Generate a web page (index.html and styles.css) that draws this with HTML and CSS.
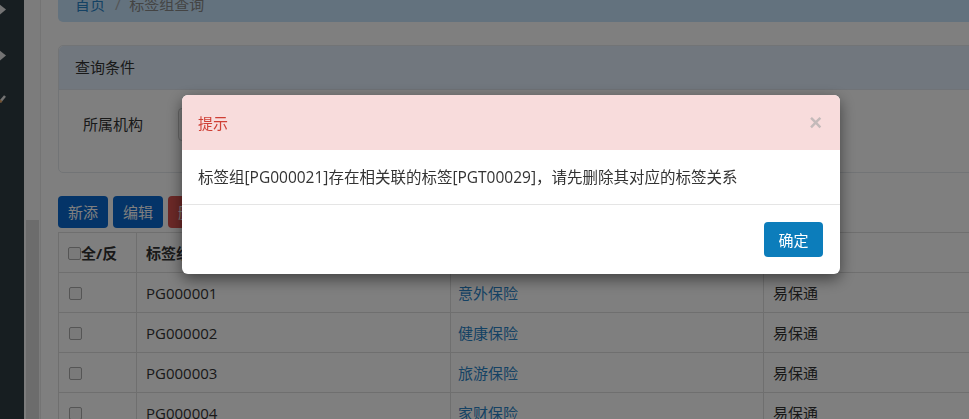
FILE: index.html
```html
<!DOCTYPE html>
<html lang="zh-CN">
  <head>
    <meta charset="UTF-8" />
    <title>标签组查询</title>
    <link rel="stylesheet" href="styles.css">
  </head>
  <body>
    <div class="layout">
      <aside class="sidebar">
        <svg class="side-icon" width="24" height="110" viewBox="0 0 24 110">
          <polygon points="-2,3 6,9.5 -2,16" fill="#e6e6e6" />
          <polygon points="-2,49 6,55.5 -2,62" fill="#e6e6e6" />
          <line x1="0" y1="102" x2="5" y2="96" stroke="#e6e6e6" stroke-width="2.5" />
          <line x1="0" y1="102" x2="1.5" y2="100.5" stroke="#e0a060" stroke-width="2.5" />
        </svg>
      </aside>
      <div class="scroll-strip"><div class="scroll-thumb"></div></div>

      <main class="content">
        <div class="breadcrumb">
          <a href="#">首页</a>
          <span class="sep">/</span>
          <span class="current">标签组查询</span>
        </div>

        <div class="panel">
          <div class="panel-heading">查询条件</div>
          <div class="panel-body">
            <label class="field-label">所属机构</label>
            <div class="select-box"></div>
          </div>
        </div>

        <div class="toolbar">
          <button class="btn btn-blue">新添</button>
          <button class="btn btn-blue">编辑</button>
          <button class="btn btn-red">删除</button>
        </div>

        <table class="grid">
          <colgroup>
            <col style="width: 78px" />
            <col style="width: 314px" />
            <col style="width: 313px" />
            <col />
          </colgroup>
          <thead>
            <tr>
              <th><span class="check"></span>全/反</th>
              <th>标签组编号</th>
              <th>标签组名称</th>
              <th>所属机构</th>
            </tr>
          </thead>
          <tbody>
            <tr>
              <td><span class="check"></span></td>
              <td>PG000001</td>
              <td class="name"><a href="#">意外保险</a></td>
              <td>易保通</td>
            </tr>
            <tr>
              <td><span class="check"></span></td>
              <td>PG000002</td>
              <td class="name"><a href="#">健康保险</a></td>
              <td>易保通</td>
            </tr>
            <tr>
              <td><span class="check"></span></td>
              <td>PG000003</td>
              <td class="name"><a href="#">旅游保险</a></td>
              <td>易保通</td>
            </tr>
            <tr>
              <td><span class="check"></span></td>
              <td>PG000004</td>
              <td class="name"><a href="#">家财保险</a></td>
              <td>易保通</td>
            </tr>
          </tbody>
        </table>
      </main>
    </div>

    <div class="backdrop"></div>

    <div class="modal">
      <div class="modal-header">
        <span class="modal-title">提示</span>
        <span class="close">&times;</span>
      </div>
      <div class="modal-body">
        标签组[PG000021]存在相关联的标签[PGT00029]，请先删除其对应的标签关系
      </div>
      <div class="modal-footer">
        <button class="btn btn-ok">确定</button>
      </div>
    </div>
  </body>
</html>
```

FILE: styles.css
```css
html,
body {
  margin: 0;
  height: 419px;
  overflow: hidden;
}
body {
  font-family: "Open Sans", "Noto Sans CJK SC", sans-serif;
  font-size: 15px;
  color: #333;
  background-color: #fff;
}
a {
  color: #2a84c8;
  text-decoration: none;
}
.layout {
  display: flex;
  height: 419px;
}
.sidebar {
  flex: none;
  width: 24px;
  background-color: #2e3d43;
}
.side-icon {
  display: block;
}
.scroll-strip {
  flex: none;
  width: 16px;
  background-color: #f8f8f8;
  border-right: 1px solid #e8e8e8;
  display: flex;
  flex-direction: column;
  justify-content: flex-end;
  align-items: center;
}
.scroll-thumb {
  width: 13px;
  height: 199px;
  background-color: #d8d8d8;
}
.content {
  flex: none;
  width: 960px;
  padding-left: 17px;
}
.breadcrumb {
  margin-top: -18px;
  height: 40px;
  box-sizing: border-box;
  padding: 12px 17px 8px;
  line-height: 20px;
  background-color: #c6e4fc;
  border-radius: 0 0 5px 5px;
}
.breadcrumb .sep {
  color: #aaa;
  margin: 0 5px 0 6px;
}
.breadcrumb .current {
  color: #888;
}
.panel {
  margin-top: 23px;
  border: 1px solid #e4e8ec;
  border-radius: 5px;
  background-color: #fff;
}
.panel-heading {
  height: 43px;
  line-height: 43px;
  padding-left: 16px;
  background-color: #e2eefc;
  border-bottom: 1px solid #e0e6ee;
  border-radius: 5px 5px 0 0;
}
.panel-body {
  display: flex;
  align-items: flex-start;
  height: 82px;
  padding: 18px 0 0 24px;
  box-sizing: border-box;
}
.field-label {
  width: 95px;
  line-height: 33px;
}
.select-box {
  width: 300px;
  height: 33px;
  box-sizing: border-box;
  border: 1px solid #ccc;
  border-radius: 4px;
}
.toolbar {
  display: flex;
  gap: 5px;
  margin-top: 23px;
}
.btn {
  font-family: "Open Sans", "Noto Sans CJK SC", sans-serif;
  font-size: 15px;
  color: #fff;
  border: none;
  border-radius: 4px;
  cursor: pointer;
  padding: 0;
}
.toolbar .btn {
  width: 50px;
  height: 32px;
  line-height: 32px;
}
.btn-blue {
  background-color: #0868d0;
}
.btn-red {
  background-color: #d9534f;
}
.grid {
  margin-top: 4px;
  width: 980px;
  border-collapse: collapse;
  table-layout: fixed;
}
.grid th,
.grid td {
  height: 39px;
  padding: 0 9px;
  border: 1px solid #dedede;
  text-align: left;
  white-space: nowrap;
  overflow: hidden;
}
.grid td.name {
  padding-left: 7px;
}
.grid th {
  font-weight: bold;
}
.check {
  display: inline-block;
  width: 11px;
  height: 11px;
  border: 1px solid #aaa;
  border-radius: 2px;
  background-color: #f4f4f4;
  vertical-align: -1px;
}
.grid td:first-child .check {
  margin-left: 1px;
}
.backdrop {
  position: fixed;
  inset: 0;
  background-color: rgba(0, 0, 0, 0.5);
}
.modal {
  position: fixed;
  left: 182px;
  top: 95px;
  width: 658px;
  background-color: #fff;
  border-radius: 6px;
  overflow: hidden;
  box-shadow: 0 5px 15px rgba(0, 0, 0, 0.5);
}
.modal-header {
  height: 55px;
  display: flex;
  align-items: center;
  justify-content: space-between;
  padding: 0 18px 0 16px;
  background-color: #f8dcdc;
}
.modal-title {
  color: #cf3f35;
  font-size: 15px;
}
.close {
  color: #c4baba;
  font-size: 22px;
  line-height: 1;
  font-family: "Liberation Sans", sans-serif;
  font-weight: bold;
}
.modal-body {
  height: 54px;
  line-height: 54px;
  padding-left: 16px;
  font-size: 15.5px;
}
.modal-footer {
  border-top: 1px solid #e5e5e5;
  height: 70px;
  display: flex;
  justify-content: flex-end;
  align-items: flex-start;
  padding: 17px 17px 0 0;
  box-sizing: border-box;
}
.btn-ok {
  width: 59px;
  height: 35px;
  background-color: #0c7dbb;
}
```
